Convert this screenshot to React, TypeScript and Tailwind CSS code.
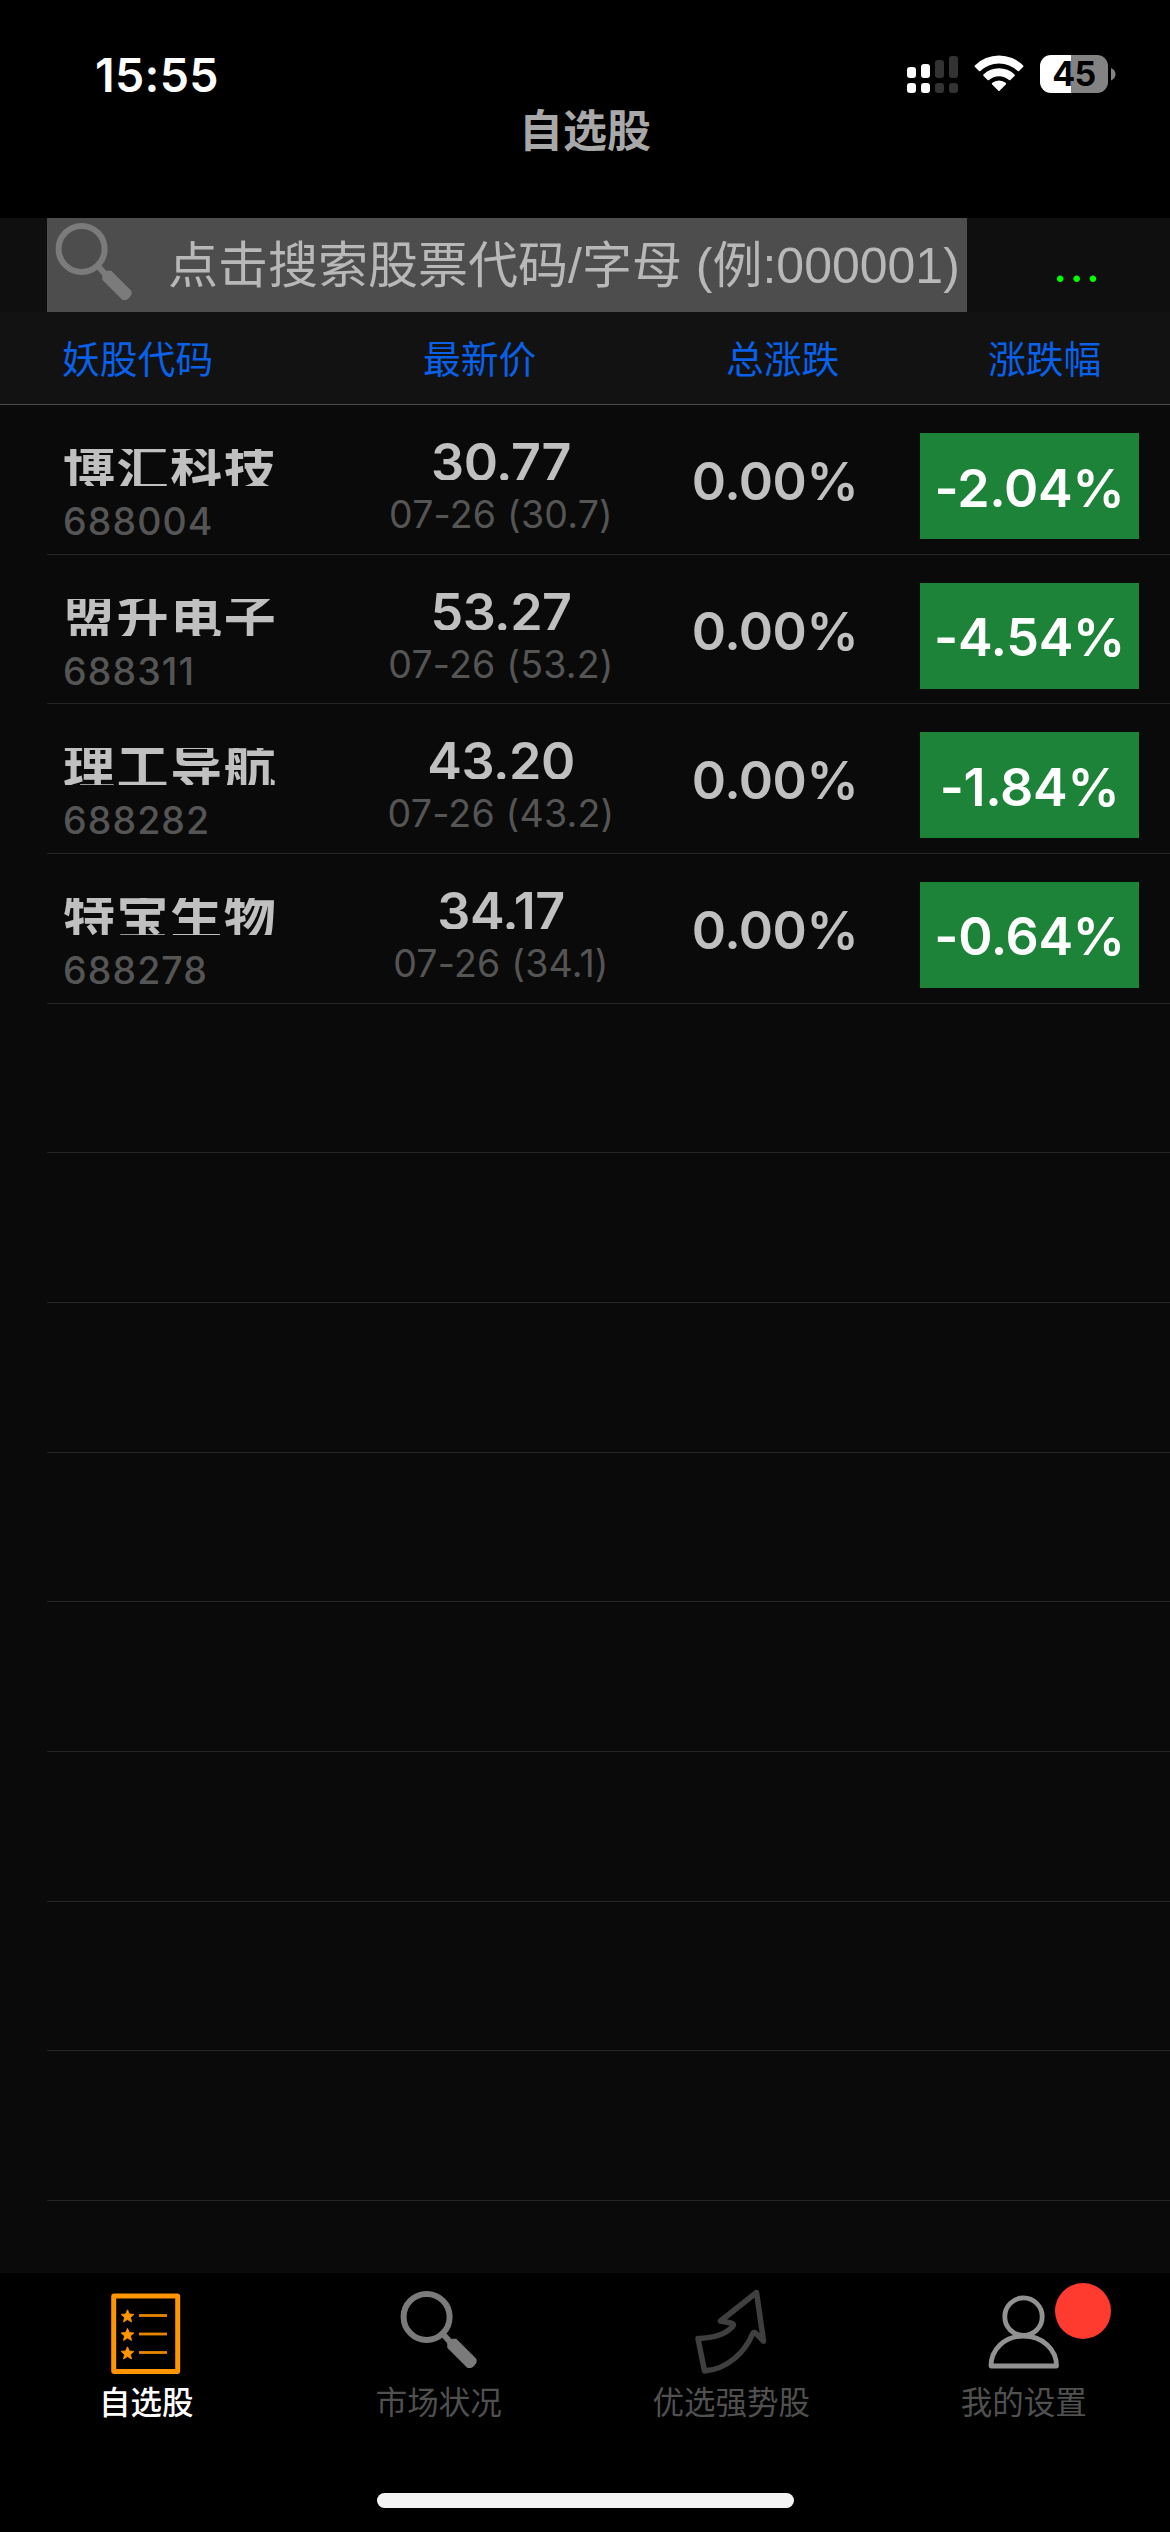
const stocks = [
  { name: "博汇科技", code: "688004", price: "30.77", date: "07-26 (30.7)", change: "-2.04%" },
  { name: "盟升电子", code: "688311", price: "53.27", date: "07-26 (53.2)", change: "-4.54%" },
  { name: "理工导航", code: "688282", price: "43.20", date: "07-26 (43.2)", change: "-1.84%" },
  { name: "特宝生物", code: "688278", price: "34.17", date: "07-26 (34.1)", change: "-0.64%" },
];

type Stock = (typeof stocks)[number];

function Magnifier() {
  return (
    <svg width="78" height="78" viewBox="0 0 78 78" fill="none">
      <ellipse cx="26.6" cy="26.9" rx="23" ry="23" stroke="#7b7b7b" strokeWidth="6" />
      <path d="M42 43 L51 53" stroke="#7b7b7b" strokeWidth="6" />
      <path d="M52 49.5 L56 49.5 L75.5 69 Q77 72 74 75 Q71 78.5 67.5 77 L48 57.5 L48 53 Z" fill="#7b7b7b" stroke="#7b7b7b" strokeWidth="1.5" strokeLinejoin="round" />
    </svg>
  );
}

function ListIcon() {
  const star = "M0 -6.2 L1.9 -2 L6.4 -1.6 L3 1.5 L4 6 L0 3.6 L-4 6 L-3 1.5 L-6.4 -1.6 L-1.9 -2 Z";
  return (
    <svg width="70" height="82" viewBox="0 0 70 82" fill="none">
      <rect x="2.7" y="2.9" width="64" height="75.7" rx="0.5" stroke="#ff9500" strokeWidth="5" />
      {[23, 41.5, 60].map((y) => (
        <g key={y}>
          <path d={star} fill="#ff9500" stroke="#ff9500" strokeWidth="0.8" transform={`translate(16.5 ${y})`} />
          <path d={`M28 ${y - 0.5} H56`} stroke="#ff9500" strokeWidth="2.8" opacity="0.9" />
        </g>
      ))}
    </svg>
  );
}

function ArrowIcon() {
  return (
    <svg width="72" height="86" viewBox="0 0 72 86" fill="none" stroke="#3f3f3f" strokeWidth="5.5" strokeLinejoin="round">
      <path d="M61.5 4.5 L25.5 33 L36 35 Q40 36 37.5 38.5 C31 46 20 50 3 50.5 L9.5 83 C33 81 50 64 57.5 46 Q58.5 43 61 45.5 L68.5 53 Z" />
    </svg>
  );
}

function PersonIcon() {
  return (
    <svg width="72" height="75" viewBox="0 0 72 75" fill="none" stroke="#929292" strokeWidth="4.8">
      <ellipse cx="35.5" cy="21.7" rx="18.7" ry="18.8" />
      <path d="M3 71 C3 55 16 41 35.5 41 S68.5 55 68.5 71 Z" strokeLinejoin="round" />
    </svg>
  );
}

function StatusBar() {
  return (
    <div className="flex h-[104px] items-start justify-between pl-[95px] pr-[54px]">
      <span className="mt-[48px] text-[46.5px] font-semibold leading-[54px] tracking-[0.3px] text-white">15:55</span>
      <div className="mt-[55px] flex items-start">
        <svg width="52" height="39" viewBox="0 0 52 39">
          <g fill="#fff">
            <rect x="0" y="12" width="9" height="11" rx="3" />
            <rect x="14" y="9" width="9" height="14" rx="3" />
            <rect x="0" y="28" width="9" height="10" rx="3" />
            <rect x="14" y="28" width="9" height="10" rx="3" />
          </g>
          <g fill="#333">
            <rect x="28" y="5" width="9" height="18" rx="3" />
            <rect x="42" y="1" width="9" height="22" rx="3" />
            <rect x="28" y="28" width="9" height="10" rx="3" />
            <rect x="42" y="28" width="9" height="10" rx="3" />
          </g>
        </svg>
        <svg className="ml-[15px]" width="50" height="37" viewBox="0 0 50 37" fill="#fff">
          <path d="M0.8 10.6 A34 34 0 0 1 49.2 10.6 Q49.5 11.3 49 12 L45 16 Q44.3 16.4 43.7 16 A27 27 0 0 0 6.3 16 Q5.7 16.4 5 16 L1 12 Q0.5 11.3 0.8 10.6 Z" />
          <path d="M9.4 19.5 A22.5 22.5 0 0 1 40.6 19.5 Q41 20.3 40.5 20.9 L36.4 25 Q35.7 25.4 35 25 A15 15 0 0 0 15 25 Q14.3 25.4 13.6 25 L9.5 20.9 Q9 20.3 9.4 19.5 Z" />
          <path d="M18 28 A11 11 0 0 1 32 28 Q32.4 28.8 31.8 29.5 L25.6 35.8 Q25 36.3 24.4 35.8 L18.2 29.5 Q17.6 28.8 18 28 Z" />
        </svg>
        <div className="ml-[16px] flex h-[38px] w-[68px] items-center justify-center rounded-[11px] bg-linear-to-r from-white from-[31px] to-[#838383] to-[31px] text-[34px] font-bold leading-none tracking-[-0.5px] text-black">
          45
        </div>
        <svg className="ml-[3px] mt-[13px]" width="5" height="13" viewBox="0 0 5 13">
          <path d="M0 0 Q4.5 2 4.5 6.3 T0 12.5 Z" fill="#838383" />
        </svg>
      </div>
    </div>
  );
}

function SearchRow() {
  return (
    <div className="flex h-[94px] bg-[#0f0f0f] pl-[47px]">
      <div className="flex h-full w-[920px] shrink-0 bg-[#4d4d4d] pl-[8px] pt-[4px]">
        <Magnifier />
        <span className="ml-[35px] mt-[9px] whitespace-nowrap text-[50px] leading-[70px] text-[#b8b8b8] font-['Liberation_Sans','Noto_Sans_CJK_SC',sans-serif]">
          点击搜索股票代码/字母 (例:000001)
        </span>
      </div>
      <span className="ml-[86px] mt-[11px] text-[50px] leading-[70px] tracking-[2px] text-[#00ff00]">...</span>
    </div>
  );
}

function ColumnTitles() {
  return (
    <div className="flex h-[93px] items-center border-b border-[#4a4a4a] bg-[#121212] pl-[62px] pt-[2px] text-[37.8px] leading-[54px] text-[#0a60e6]">
      <span className="w-[361px]">妖股代码</span>
      <span className="w-[303px]">最新价</span>
      <span className="w-[262px]">总涨跌</span>
      <span>涨跌幅</span>
    </div>
  );
}

function StockRow({ stock }: { stock?: Stock }) {
  return (
    <div className="h-[149.67px] shrink-0 pl-[47px]">
      <div className="flex h-full border-b border-[#262626]">
        {stock && (
          <>
            <div className="w-[325px] pl-[16px] pt-[44px]">
              <div className="h-[37px] overflow-hidden text-[52px] font-semibold tracking-[1.6px] text-[#c0c0c0]">
                <span className="-mt-[5px] block leading-[52px]">{stock.name}</span>
              </div>
              <div className="mt-[12px] text-[37.5px] font-medium leading-[48px] tracking-[1.1px] text-[#555]">
                {stock.code}
              </div>
            </div>
            <div className="w-[258px] pt-[33px] text-center">
              <div className="h-[42px] overflow-hidden text-[52px] font-semibold leading-[50px] tracking-[-0.5px] text-[#c0c0c0]">
                {stock.price}
              </div>
              <div className="mt-[11px] whitespace-nowrap text-[37.5px] leading-[48px] tracking-[0.2px] text-[#555]">
                {stock.date}
              </div>
            </div>
            <div className="w-[290px] pt-[47px] text-center text-[52px] font-semibold leading-[60px] tracking-[-0.5px] text-[#c0c0c0]">
              0.00%
            </div>
            <div className="mt-[28px] flex h-[106px] w-[219px] items-center justify-center bg-[#1c8338] pt-[5px] text-[52px] font-semibold leading-[60px] tracking-[-0.3px] text-white">
              {stock.change}
            </div>
          </>
        )}
      </div>
    </div>
  );
}

function TabBar() {
  const tabs = [
    { label: "自选股", icon: <ListIcon />, top: "mt-[20px]", tone: "text-white font-medium" },
    { label: "市场状况", icon: <Magnifier />, top: "mt-[17px]", tone: "text-[#505050]" },
    { label: "优选强势股", icon: <ArrowIcon />, top: "mt-[15px]", tone: "text-[#505050]" },
    { label: "我的设置", icon: <PersonIcon />, top: "mt-[22px]", tone: "text-[#505050]", badge: true },
  ];
  return (
    <nav className="flex h-[259px] shrink-0 flex-col items-center bg-black">
      <div className="grid h-[220px] w-full grid-cols-4">
        {tabs.map((tab) => (
          <div key={tab.label} className="flex flex-col items-center">
            <div className="relative h-[107px]">
              <div className={tab.top}>{tab.icon}</div>
              {tab.badge && (
                <span className="absolute left-[67px] top-[10px] h-[56px] w-[56px] rounded-full bg-[#ff3b30]" />
              )}
            </div>
            <span className={`text-[31.5px] leading-[46px] ${tab.tone}`}>{tab.label}</span>
          </div>
        ))}
      </div>
      <div className="h-[15px] w-[417px] rounded-full bg-[#f4f4f4]" />
    </nav>
  );
}

export default function App() {
  return (
    <div className="flex h-[2532px] w-[1170px] flex-col overflow-hidden bg-[#0a0a0a] font-['Inter','Noto_Sans_CJK_SC',sans-serif]">
      <header className="h-[218px] shrink-0 bg-black">
        <StatusBar />
        <h1 className="text-center text-[44px] font-semibold leading-[55px] text-[#a8a8a8]">自选股</h1>
      </header>
      <SearchRow />
      <ColumnTitles />
      <main className="flex min-h-0 flex-1 flex-col overflow-hidden">
        {stocks.map((stock) => (
          <StockRow key={stock.code} stock={stock} />
        ))}
        {Array.from({ length: 9 }, (_, i) => (
          <StockRow key={i} />
        ))}
      </main>
      <TabBar />
    </div>
  );
}
